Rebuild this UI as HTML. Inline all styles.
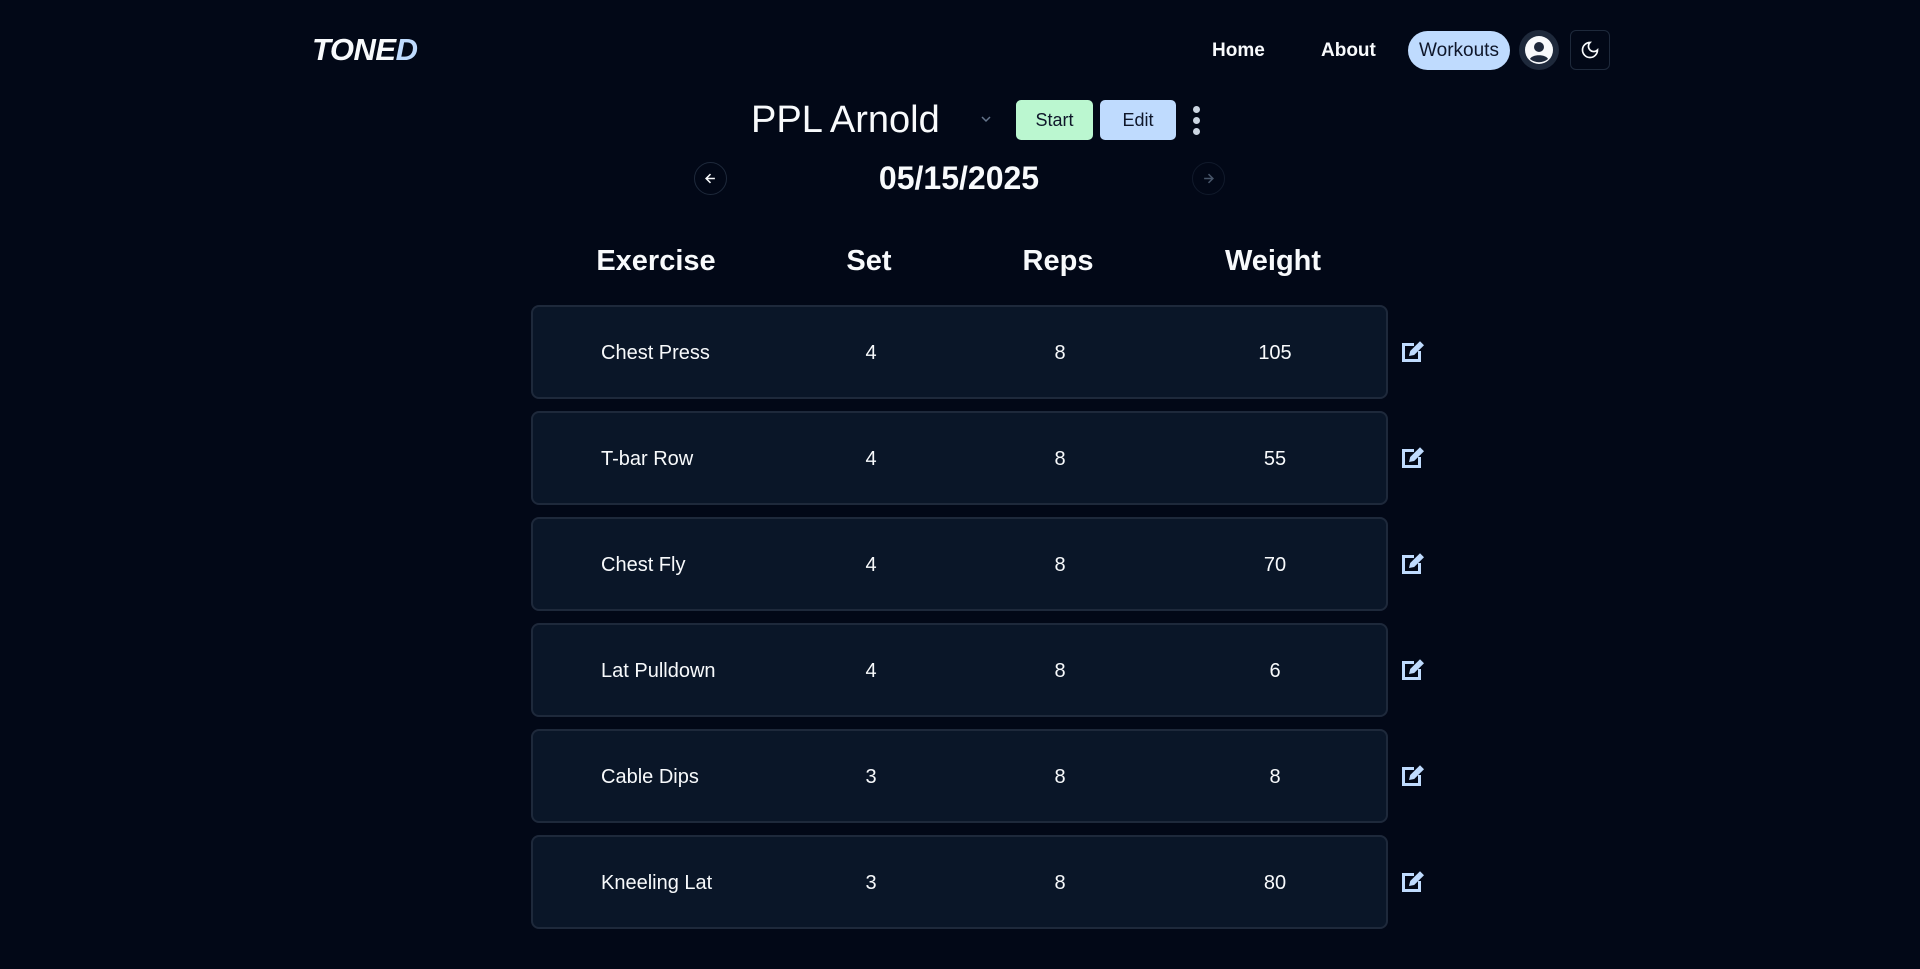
<!DOCTYPE html>
<html><head><style>
*{margin:0;padding:0;box-sizing:border-box}
body{width:1920px;height:969px;background:#020817;color:#f8fafc;font-family:"Liberation Sans",sans-serif;position:relative;overflow:hidden}
.a{position:absolute}
.logo{left:312px;top:32px;font-size:31px;font-weight:bold;font-style:italic;letter-spacing:-0.5px}
.nav{top:40px;font-size:19px;font-weight:bold}
.pill{left:1408px;top:31px;width:102px;height:39px;border-radius:20px;background:#bfdbfe;color:#0f172a;font-size:19px;text-align:center;line-height:39px}
.btn{top:100px;height:40px;border-radius:5px;color:#0f172a;font-size:18px;text-align:center;line-height:40px}
.hdr{top:245px;font-size:29px;font-weight:bold;transform:translateX(-50%)}
.row{left:531px;width:857px;height:94px;background:#0a1628;border:2px solid #1e293b;border-radius:8px}
.cell{font-size:20px;top:35px;transform:translateX(-50%)}
</style></head><body>
<div class="a logo">TONE<span style="color:#bfdbfe">D</span></div>
<div class="a nav" style="left:1212px">Home</div>
<div class="a nav" style="left:1321px">About</div>
<div class="a pill">Workouts</div>
<div class="a" style="left:1519px;top:30px;width:40px;height:40px;border-radius:50%;background:#1e293b"></div>
<svg class="a" style="left:1525px;top:36px" width="28" height="28" viewBox="0 0 28 28"><circle cx="14" cy="14" r="14" fill="#f8fafc"/><circle cx="14" cy="11" r="5" fill="#1e293b"/><path d="M5 23c2-5 16-5 18 0a14 14 0 0 1-18 0z" fill="#1e293b"/></svg>
<div class="a" style="left:1570px;top:30px;width:40px;height:40px;border:1px solid #1e293b;border-radius:6px"></div>
<svg class="a" style="left:1580px;top:40px" width="20" height="20" viewBox="0 0 24 24" fill="none" stroke="#f8fafc" stroke-width="2"><path d="M12 3a6 6 0 0 0 9 9 9 9 0 1 1-9-9z"/></svg>
<div class="a" style="left:751px;top:99px;font-size:38px">PPL Arnold</div>
<svg class="a" style="left:980px;top:114px" width="12" height="10" viewBox="0 0 12 10" fill="none" stroke="#64748b" stroke-width="1.5"><path d="M2 3l4 4 4-4"/></svg>
<div class="a btn" style="left:1016px;width:77px;background:#bbf7d0">Start</div>
<div class="a btn" style="left:1100px;width:76px;background:#bfdbfe">Edit</div>
<div class="a" style="left:1193px;top:106px;width:7px;height:7px;border-radius:50%;background:#cbd5e1;box-shadow:0 11px 0 #cbd5e1,0 22px 0 #cbd5e1"></div>
<div class="a" style="left:694px;top:162px;width:33px;height:33px;border-radius:50%;border:1px solid #1e293b"></div>
<svg class="a" style="left:703px;top:171px" width="15" height="15" viewBox="0 0 24 24" fill="none" stroke="#f8fafc" stroke-width="2.5"><path d="M19 12H5M12 5l-7 7 7 7"/></svg>
<div class="a" style="left:1192px;top:162px;width:33px;height:33px;border-radius:50%;border:1px solid #111a2b"></div>
<svg class="a" style="left:1201px;top:171px" width="15" height="15" viewBox="0 0 24 24" fill="none" stroke="#475569" stroke-width="2.5"><path d="M5 12h14M12 5l7 7-7 7"/></svg>
<div class="a" style="left:959px;top:160px;transform:translateX(-50%);font-size:32px;font-weight:bold">05/15/2025</div>
<div class="a hdr" style="left:656px">Exercise</div>
<div class="a hdr" style="left:869px">Set</div>
<div class="a hdr" style="left:1058px">Reps</div>
<div class="a hdr" style="left:1273px">Weight</div>
<div id="rows"></div>
<script>
var d=[["Chest Press",4,8,105],["T-bar Row",4,8,55],["Chest Fly",4,8,70],["Lat Pulldown",4,8,6],["Cable Dips",3,8,8],["Kneeling Lat",3,8,80]];
var h="";d.forEach(function(r,i){var t=305+i*106;
h+='<div class="a row" style="top:'+t+'px"><div class="a" style="left:68px;top:35px;font-size:20px">'+r[0]+'</div><div class="a cell" style="left:338px">'+r[1]+'</div><div class="a cell" style="left:527px">'+r[2]+'</div><div class="a cell" style="left:742px">'+r[3]+'</div></div>';
h+='<svg class="a" style="left:1400px;top:'+(t+33)+'px" width="26" height="26" viewBox="0 0 26 26"><path d="M2 5h12v3H5v13h13v-8h3v11H2z" fill="#bfdbfe"/><path d="M9 18l1.2-5L20 3.2l4 4L14.2 17z" fill="#bfdbfe"/></svg>';});
document.getElementById("rows").innerHTML=h;
</script>
</body></html>
